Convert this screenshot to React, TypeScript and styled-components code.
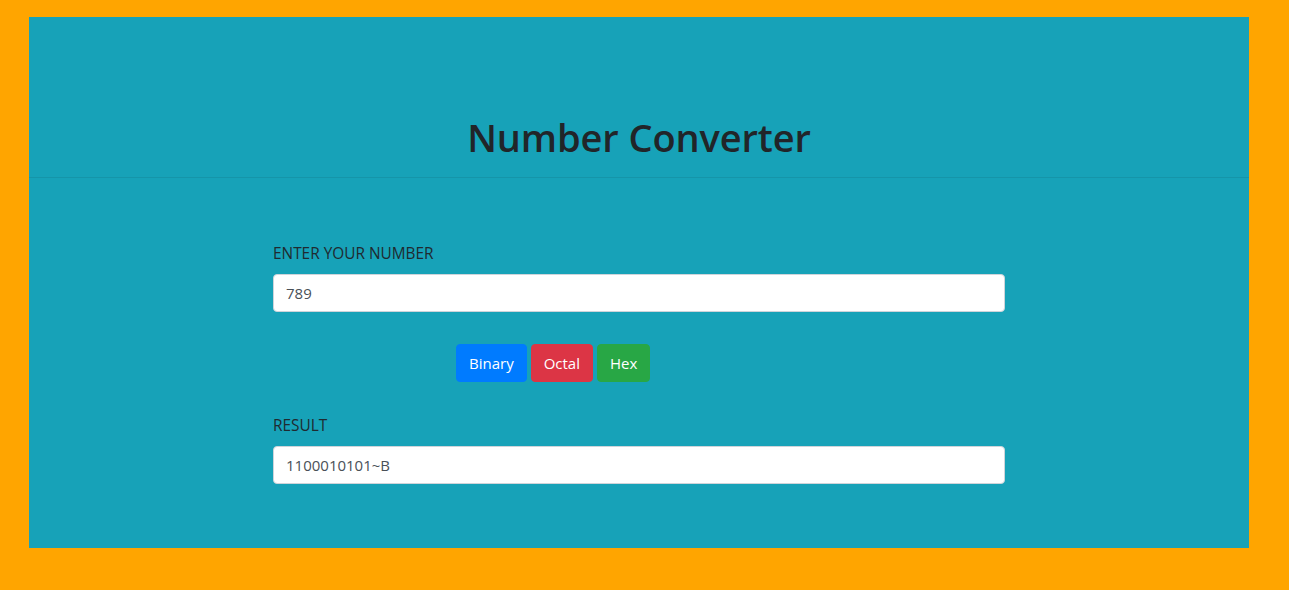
import React from "react";
import styled, { createGlobalStyle } from "styled-components";

const Global = createGlobalStyle`
  html, body { margin: 0; padding: 0; background: #ffa500; }
  body { font-family: "Open Sans", "Noto Sans", sans-serif; color: #212529; }
  * { box-sizing: border-box; }
`;

const Page = styled.div`
  padding: 17px 40px 42px 29px;
`;

const Panel = styled.div`
  width: 1220px;
  height: 531px;
  background: #17a2b8;
`;

const Header = styled.header`
  height: 161px;
  display: flex;
  align-items: flex-end;
  justify-content: center;
  border-bottom: 1px solid rgba(0, 0, 0, 0.08);
  padding-bottom: 16px;
`;

const Title = styled.h1`
  margin: 0;
  font-size: 38px;
  font-weight: 600;
  line-height: 1.2;
  color: #212529;
  letter-spacing: -0.1px;
`;

const Content = styled.main`
  width: 732px;
  margin: 0 auto;
  padding-top: 64px;
  display: flex;
  flex-direction: column;
`;

const Label = styled.label`
  font-size: 15.4px;
  line-height: 24px;
  margin-bottom: 8px;
  color: #1f2a30;
`;

const Input = styled.input`
  width: 100%;
  height: 38px;
  padding: 6px 12px;
  font-family: inherit;
  font-size: 15px;
  color: #495057;
  background: #fff;
  border: 1px solid #ced4da;
  border-radius: 4px;
  outline: none;
`;

const ButtonRow = styled.div`
  display: flex;
  gap: 4px;
  margin: 32px 0 32px 183px;
`;

const Button = styled.button<{ $bg: string }>`
  height: 38px;
  padding: 0 12px;
  font-family: inherit;
  font-size: 15px;
  color: #fff;
  background: ${(p) => p.$bg};
  border: 1px solid ${(p) => p.$bg};
  border-radius: 4px;
  cursor: pointer;
`;

export default function App() {
  return (
    <>
      <Global />
      <Page>
        <Panel>
          <Header>
            <Title>Number Converter</Title>
          </Header>
          <Content>
            <Label>ENTER YOUR NUMBER</Label>
            <Input defaultValue="789" />
            <ButtonRow>
              <Button $bg="#007bff">Binary</Button>
              <Button $bg="#dc3545">Octal</Button>
              <Button $bg="#28a745">Hex</Button>
            </ButtonRow>
            <Label>RESULT</Label>
            <Input defaultValue="1100010101~B" readOnly />
          </Content>
        </Panel>
      </Page>
    </>
  );
}
